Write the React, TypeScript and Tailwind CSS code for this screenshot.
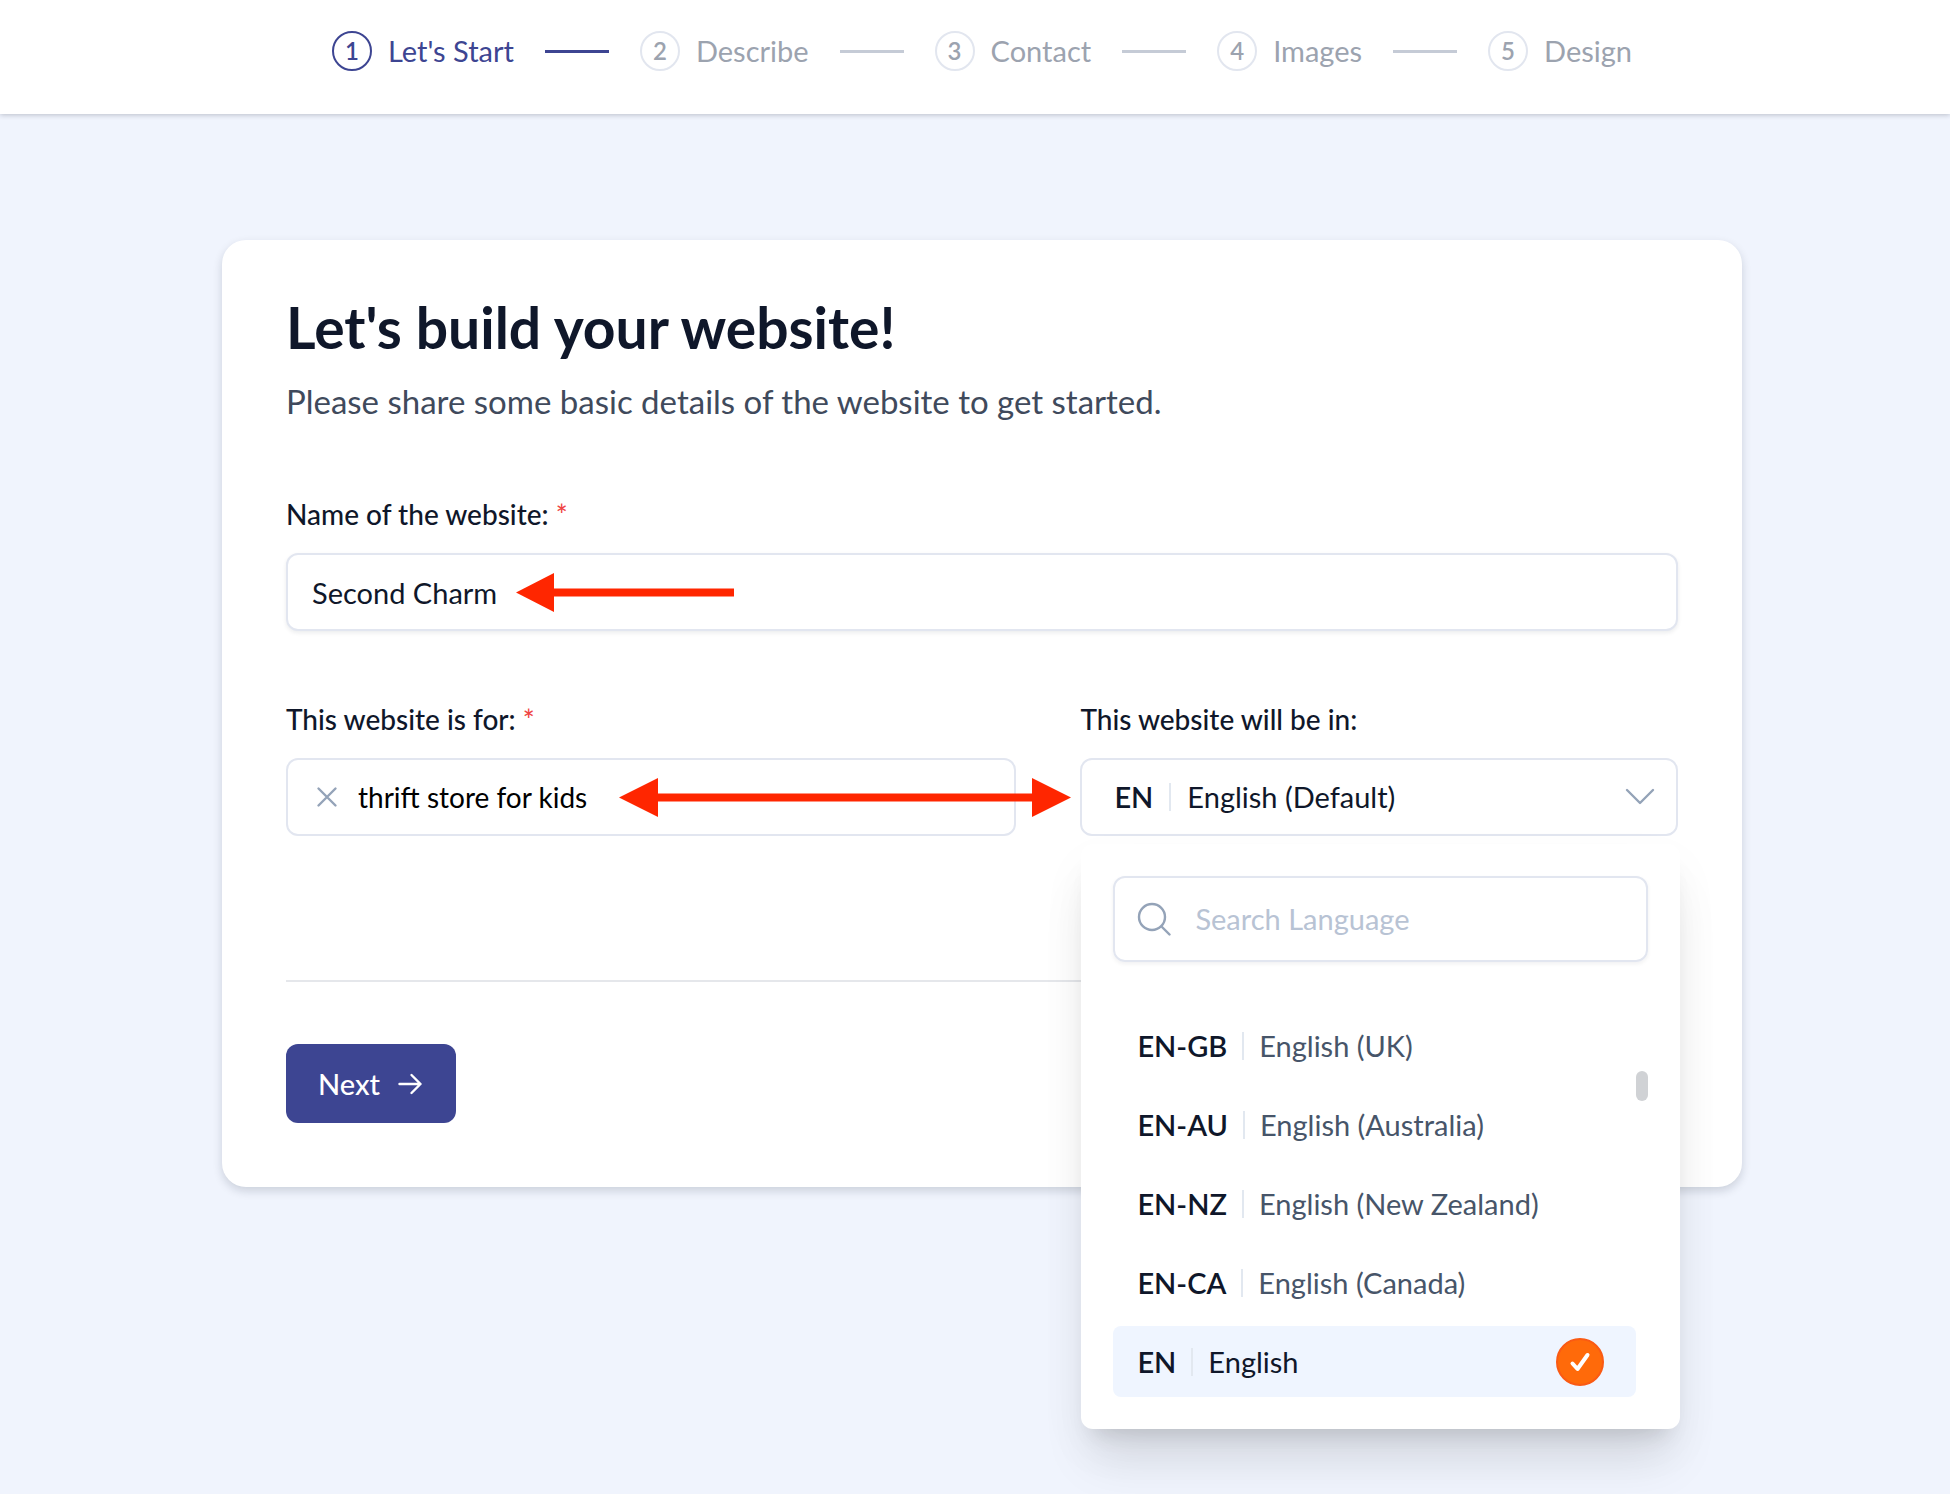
import React from "react";

const steps = ["Let's Start", "Describe", "Contact", "Images", "Design"];

const languages = [
  { code: "EN-GB", name: "English (UK)" },
  { code: "EN-AU", name: "English (Australia)" },
  { code: "EN-NZ", name: "English (New Zealand)" },
  { code: "EN-CA", name: "English (Canada)" },
  { code: "EN", name: "English", selected: true },
];

function Stepper() {
  return (
    <header className="relative z-10 bg-white pt-[31px] pb-[43px] pl-[14px] shadow-[0_1px_5px_rgba(15,23,42,0.24)]">
      <ol className="flex items-center justify-center gap-[31px]">
        {steps.map((label, i) => (
          <React.Fragment key={label}>
            {i > 0 && (
              <li
                aria-hidden="true"
                className={i === 1 ? "h-[3px] w-16 bg-[#3d4592]" : "h-[3px] w-16 bg-[#c5cbd6]"}
              />
            )}
            <li
              className={
                i === 0
                  ? "flex items-center gap-4 text-[29px] leading-10 text-[#3d4592]"
                  : "flex items-center gap-4 text-[29px] leading-10 text-[#9ca3af]"
              }
            >
              <span
                className={
                  i === 0
                    ? "flex size-10 items-center justify-center rounded-full border-2 border-[#3d4592] text-2xl font-semibold"
                    : "flex size-10 items-center justify-center rounded-full border-2 border-[#e2e6ef] text-2xl font-semibold"
                }
              >
                {i + 1}
              </span>
              {label}
            </li>
          </React.Fragment>
        ))}
      </ol>
    </header>
  );
}

function LeftArrow() {
  return (
    <svg
      aria-hidden="true"
      className="pointer-events-none absolute top-5 left-[230px]"
      width="218"
      height="40"
      viewBox="0 0 218 40"
      fill="#ff2600"
    >
      <path d="M0 19.500 38 0v15.500h180v8H38V39z" />
    </svg>
  );
}

function DoubleArrow() {
  return (
    <svg
      aria-hidden="true"
      className="pointer-events-none absolute top-[18px] left-[331px] z-10"
      width="452"
      height="40"
      viewBox="0 0 452 40"
      fill="#ff2600"
    >
      <path d="M0 19.500 39 0v15.500h374V0l39 19.500L413 39V23.500H39V39z" />
    </svg>
  );
}

function LanguageMenu() {
  return (
    <div className="absolute top-full left-px z-20 mt-2 w-[599px] rounded-xl bg-white p-8 shadow-[0_40px_50px_-10px_rgba(0,0,0,0.10),0_16px_20px_-12px_rgba(0,0,0,0.12),0_20px_50px_rgba(0,0,0,0.04)]">
      <label className="flex h-[86px] items-center gap-6 rounded-xl border-2 border-[#e2e6f0] px-[22px] shadow-[0_2px_4px_rgba(15,23,42,0.06)]">
        <svg width="34" height="34" viewBox="0 0 34 34" fill="none" stroke="#94a3b8" strokeWidth="2.4" strokeLinecap="round" aria-hidden="true">
          <circle cx="15" cy="15" r="13" />
          <path d="m24.500 24.500 8 8" />
        </svg>
        <input
          type="text"
          aria-label="Search Language"
          placeholder="Search Language"
          className="min-w-0 flex-1 bg-transparent text-[29px] outline-none placeholder:text-[#b8c3d4]"
        />
      </label>
      <div className="mt-12 flex">
        <ul role="listbox" aria-label="Languages" className="flex flex-1 flex-col gap-2">
          {languages.map((l) => (
            <li key={l.code} role="option" aria-selected={!!l.selected}>
              <button
                type="button"
                className={
                  l.selected
                    ? "flex h-[71px] w-full items-center rounded-lg bg-[#eff5ff] pr-8 pl-6 text-[29px] text-[#0f172a]"
                    : "flex h-[71px] w-full items-center rounded-lg pr-8 pl-6 text-[29px] text-[#475569]"
                }
              >
                <span className="font-semibold text-[#0f172a]">{l.code}</span>
                <span className="mx-[15px] h-7 w-[2px] bg-[#e2e8f0]" />
                <span>{l.name}</span>
                {l.selected && (
                  <span className="ml-auto flex size-12 items-center justify-center rounded-full border-2 border-[#fa5a14] bg-[#ff6a0a]">
                    <svg width="24" height="24" viewBox="0 0 24 24" fill="none" stroke="#fff" strokeWidth="4" strokeLinecap="round" strokeLinejoin="round" aria-hidden="true">
                      <path d="m4.500 13.500 5 5.500L19.500 5" />
                    </svg>
                  </span>
                )}
              </button>
            </li>
          ))}
        </ul>
        <div aria-hidden="true" className="mt-[61px] h-[30px] w-3 rounded-full bg-[#d0d2d5]" />
      </div>
    </div>
  );
}

export default function App() {
  return (
    <div className="min-h-screen bg-[#f0f4fd] font-['Lato',sans-serif] text-[#0f172a]">
      <Stepper />
      <main className="pt-[126px] pl-[14px]">
        <form
          onSubmit={(e) => e.preventDefault()}
          className="mx-auto max-w-[1520px] rounded-3xl bg-white px-16 pt-[59px] pb-16 shadow-[0_4px_10px_rgba(15,23,42,0.16)]"
        >
          <h1 className="text-[57px] leading-[56px] font-bold">Let's build your website!</h1>
          <p className="mt-[26px] text-[33px] leading-10 text-[#404a5c]">
            Please share some basic details of the website to get started.
          </p>

          <div className="mt-[77px]">
            <label htmlFor="site-name" className="block text-[28px] leading-8 font-medium">
              Name of the website: <span className="text-[#ef4444]">*</span>
            </label>
            <div className="relative mt-[23px]">
              <input
                id="site-name"
                type="text"
                defaultValue="Second Charm"
                className="h-[78px] w-full rounded-xl border-2 border-[#e2e6f0] bg-white px-6 text-[29px] shadow-[0_2px_4px_rgba(15,23,42,0.08)] outline-none"
              />
              <LeftArrow />
            </div>
          </div>

          <div className="mt-[72px] grid grid-cols-[55fr_45fr] gap-16">
            <div>
              <label htmlFor="site-type" className="block text-[28px] leading-8 font-medium">
                This website is for: <span className="text-[#ef4444]">*</span>
              </label>
              <div className="relative mt-[23px] flex h-[78px] items-center gap-5 rounded-xl border-2 border-[#e2e6f0] pr-4 pl-7">
                <button type="button" aria-label="Clear">
                  <svg className="block" width="22" height="22" viewBox="0 0 22 22" fill="none" stroke="#94a3b8" strokeWidth="2.4" strokeLinecap="round" aria-hidden="true">
                    <path d="m2.500 2.500 17 17m0-17-17 17" />
                  </svg>
                </button>
                <input
                  id="site-type"
                  type="text"
                  defaultValue="thrift store for kids"
                  className="min-w-0 flex-1 bg-transparent text-[28px] text-black outline-none"
                />
                <DoubleArrow />
              </div>
            </div>
            <div>
              <label htmlFor="site-language" className="block text-[28px] leading-8 font-medium">
                This website will be in:
              </label>
              <div className="relative mt-[23px]">
                <button
                  id="site-language"
                  type="button"
                  aria-haspopup="listbox"
                  aria-expanded="true"
                  className="flex h-[78px] w-full items-center rounded-xl border-2 border-[#e2e6f0] bg-white pr-5 pl-8 text-[29px]"
                >
                  <span className="font-semibold">EN</span>
                  <span className="mx-4 h-7 w-[2px] bg-[#e2e8f0]" />
                  <span>English (Default)</span>
                  <svg className="ml-auto" width="32" height="20" viewBox="0 0 32 20" fill="none" stroke="#94a3b8" strokeWidth="2.4" strokeLinecap="round" strokeLinejoin="round" aria-hidden="true">
                    <path d="m3 3 13 13L29 3" />
                  </svg>
                </button>
                <LanguageMenu />
              </div>
            </div>
          </div>

          <hr className="mt-36 border-t-2 border-[#e5e7eb]" />
          <button
            type="submit"
            className="mt-[62px] flex h-[79px] items-center gap-4 rounded-xl bg-[#3d4592] px-8 text-[29px] font-medium text-white"
          >
            Next
            <svg width="28" height="24" viewBox="0 0 28 24" fill="none" stroke="currentColor" strokeWidth="2.4" strokeLinecap="round" strokeLinejoin="round" aria-hidden="true">
              <path d="M3.500 12h21M15.500 3l9 9-9 9" />
            </svg>
          </button>
        </form>
      </main>
    </div>
  );
}
